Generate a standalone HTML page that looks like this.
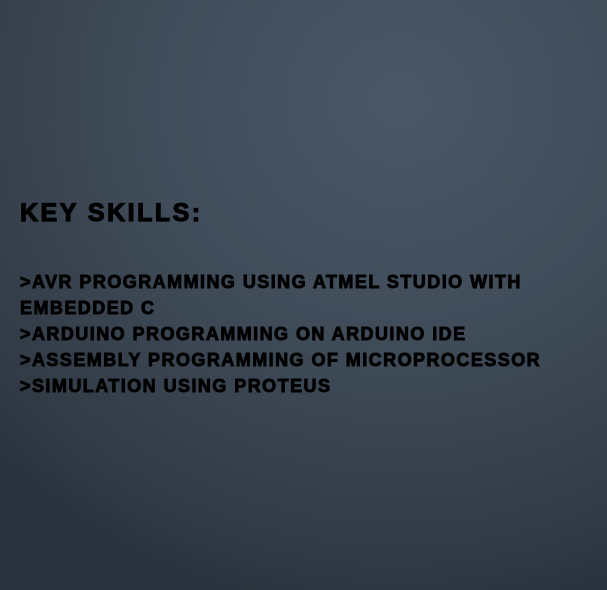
<!DOCTYPE html>
<html><head><style>
html,body{margin:0;padding:0;}
body{width:607px;height:590px;overflow:hidden;
background:radial-gradient(ellipse 560px 520px at 400px 100px,#4a5866 0%,#404c59 45%,#323c47 85%,#2a333d 100%);
font-family:"Liberation Sans",sans-serif;font-weight:bold;color:#000;position:relative;}
.t{position:absolute;left:20px;top:199px;font-size:25px;letter-spacing:2.5px;-webkit-text-stroke:1.2px #000;}
.b{position:absolute;left:20px;top:269px;font-size:18px;line-height:26px;letter-spacing:1.45px;-webkit-text-stroke:0.9px #000;white-space:nowrap;}
</style></head><body>
<div class="t">KEY SKILLS:</div>
<div class="b">&gt;AVR PROGRAMMING USING ATMEL STUDIO WITH<br>EMBEDDED C<br>&gt;ARDUINO PROGRAMMING ON ARDUINO IDE<br>&gt;ASSEMBLY PROGRAMMING OF MICROPROCESSOR<br>&gt;SIMULATION USING PROTEUS</div>
</body></html>
